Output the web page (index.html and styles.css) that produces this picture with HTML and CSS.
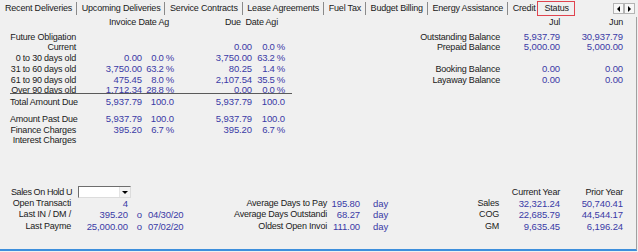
FILE: index.html
```html
<!DOCTYPE html>
<html lang="en">
<head>
    <meta charset="UTF-8">
    <title>Customer Status</title>
    <link rel="stylesheet" href="styles.css">
</head>
<body>
    <div class="tabs">
        <span class="tab">Recent Deliveries</span>
        <span class="tab">Upcoming Deliveries</span>
        <span class="tab">Service Contracts</span>
        <span class="tab">Lease Agreements</span>
        <span class="tab">Fuel Tax</span>
        <span class="tab">Budget Billing</span>
        <span class="tab">Energy Assistance</span>
        <span class="tab before-active">Credit</span>
        <span class="tab active">Status</span>
        <span class="scroll">
            <span class="scroll-btn left"></span>
            <span class="scroll-btn right"></span>
        </span>
    </div>

    <div class="panel">
        <div class="top">
            <!-- aging -->
            <div class="aging">
                <div class="aging-head">
                    <span class="h-inv">Invoice Date Ag</span>
                    <span>Due&nbsp; Date Agi</span>
                </div>
                <div class="aging-body grid5">
                    <span class="lbl">Future Obligation</span><span></span><span></span><span></span><span></span>
                    <span class="lbl">Current</span><span></span><span></span><span class="num">0.00</span><span class="num pct">0.0 %</span>
                    <span class="lbl">0 to 30 days old</span><span class="num">0.00</span><span class="num pct">0.0 %</span><span class="num">3,750.00</span><span class="num pct">63.2 %</span>
                    <span class="lbl">31 to 60 days old</span><span class="num">3,750.00</span><span class="num pct">63.2 %</span><span class="num">80.25</span><span class="num pct">1.4 %</span>
                    <span class="lbl">61 to 90 days old</span><span class="num">475.45</span><span class="num pct">8.0 %</span><span class="num">2,107.54</span><span class="num pct">35.5 %</span>
                    <span class="lbl">Over 90 days old</span><span class="num">1,712.34</span><span class="num pct">28.8 %</span><span class="num">0.00</span><span class="num pct">0.0 %</span>
                </div>
                <div class="totals grid5">
                    <span class="lbl">Total Amount Due</span><span class="num">5,937.79</span><span class="num">100.0</span><span class="num">5,937.79</span><span class="num">100.0</span>
                </div>
                <div class="past grid5">
                    <span class="lbl">Amount Past Due</span><span class="num">5,937.79</span><span class="num">100.0</span><span class="num">5,937.79</span><span class="num">100.0</span>
                    <span class="lbl">Finance Charges</span><span class="num">395.20</span><span class="num pct">6.7 %</span><span class="num">395.20</span><span class="num pct">6.7 %</span>
                    <span class="lbl">Interest Charges</span><span></span><span></span><span></span><span></span>
                </div>
            </div>

            <!-- balances -->
            <div class="balances">
                <div class="bal-head grid3">
                    <span></span><span class="lbl">Jul</span><span class="lbl">Jun</span>
                </div>
                <div class="bal-body grid3">
                    <span class="lbl">Outstanding Balance</span><span class="num">5,937.79</span><span class="num">30,937.79</span>
                    <span class="lbl">Prepaid Balance</span><span class="num">5,000.00</span><span class="num">5,000.00</span>
                    <span class="blank-row"></span>
                    <span class="lbl">Booking Balance</span><span class="num">0.00</span><span class="num">0.00</span>
                    <span class="lbl">Layaway Balance</span><span class="num">0.00</span><span class="num">0.00</span>
                </div>
            </div>
        </div>

        <div class="bottom">
            <div class="grp grp-left">
                <span class="hold-lbl">Sales On Hold U</span>
                <span class="combo"><span class="combo-btn"></span></span>
                <span class="lbl">Open Transacti</span><span class="num">4</span><span></span><span></span>
                <span class="lbl">Last IN / DM /</span><span class="num">395.20</span><span class="num">o</span><span class="date">04/30/20</span>
                <span class="lbl">Last Payme</span><span class="num">25,000.00</span><span class="num">o</span><span class="date">07/02/20</span>
            </div>
            <div class="grp grp-mid">
                <span class="lbl">Average Days to Pay</span><span class="num">195.80</span><span class="unit">day</span>
                <span class="lbl">Average Days Outstandi</span><span class="num">68.27</span><span class="unit">day</span>
                <span class="lbl">Oldest Open Invoi</span><span class="num">111.00</span><span class="unit">day</span>
            </div>
            <div class="grp grp-right">
                <span></span><span class="lbl">Current Year</span><span class="lbl">Prior Year</span>
                <span class="lbl">Sales</span><span class="num">32,321.24</span><span class="num">50,740.41</span>
                <span class="lbl">COG</span><span class="num">22,685.79</span><span class="num">44,544.17</span>
                <span class="lbl">GM</span><span class="num">9,635.45</span><span class="num">6,196.24</span>
            </div>
        </div>
    </div>
</body>
</html>
```

FILE: styles.css
```css
* {
    box-sizing: border-box;
}
body {
    margin: 0;
    width: 638px;
    height: 252px;
    overflow: hidden;
    background-color: #f0f0f0;
    font-family: "Liberation Sans", Arial, sans-serif;
    font-size: 9px;
    letter-spacing: -0.2px;
    color: #1a1a1a;
}

/* tab strip */
.tabs {
    display: flex;
    align-items: center;
    height: 17px;
}
.tab {
    height: 13px;
    line-height: 13px;
    padding: 0 4px 0 4.6px;
    border-left: 1px solid #8a8a8a;
    white-space: nowrap;
}
.tab:first-child {
    border-left: none;
    padding-left: 5px;
}
.tab.before-active {
    padding-right: 2px;
}
.tab.active {
    height: 15px;
    border: 1px solid #e0444f;
    padding: 0 5px 0 6px;
}
.scroll {
    display: flex;
    margin-left: auto;
    margin-right: 3px;
}
.scroll-btn {
    display: flex;
    align-items: center;
    justify-content: center;
    width: 11px;
    height: 11px;
    border: 1px solid #b4b4b4;
    background-color: #f7f7f7;
}
.scroll-btn::before {
    content: "";
    border-top: 3px solid transparent;
    border-bottom: 3px solid transparent;
}
.scroll-btn.left::before {
    border-right: 3px solid #000;
}
.scroll-btn.right::before {
    border-left: 3px solid #000;
}

/* page */
.panel {
    display: flex;
    flex-direction: column;
    width: 637px;
    height: 234px;
    padding-bottom: 17px;
    border-right: 1px solid #a0a0a0;
    border-bottom: 2px solid #3d8fdc;
}
.top {
    display: flex;
    justify-content: space-between;
    padding: 0 13px 0 10px;
}
.lbl {
    text-align: right;
    white-space: nowrap;
}
.num {
    text-align: right;
    white-space: nowrap;
    font-size: 9.5px;
    letter-spacing: -0.1px;
    color: #3a3aa6;
}
.pct {
    letter-spacing: -0.3px;
}

/* aging */
.aging {
    width: 282px;
}
.aging-head {
    display: grid;
    grid-template-columns: 215px auto;
    height: 11px;
    line-height: 11px;
}
.h-inv {
    padding-left: 99px;
}
.grid5 {
    display: grid;
    grid-template-columns: 66px 66px 32px 78px 33px;
    grid-auto-rows: 10.75px;
    line-height: 10.75px;
}
.aging-body {
    margin-top: 2px;
    padding-top: 1.5px;
    height: 64px;
    overflow: hidden;
    border-bottom: 1px solid #5a5a5a;
}
.totals {
    margin-top: 3px;
}
.past {
    margin-top: 6px;
}

/* balances */
.grid3 {
    display: grid;
    grid-template-columns: 100px 60px 63px;
}
.bal-head {
    height: 11px;
    line-height: 11px;
}
.bal-body {
    margin-top: 3.5px;
    grid-auto-rows: 10.75px;
    line-height: 10.75px;
}
.blank-row {
    grid-column: 1 / -1;
}

/* bottom */
.bottom {
    display: flex;
    margin-top: auto;
}
.grp {
    display: grid;
    grid-auto-rows: 11.3px;
    line-height: 11.3px;
}
.grp-left {
    grid-template-columns: 71px 57px 14px 39px;
}
.grp-mid {
    grid-template-columns: 107px 33px 26px;
    margin-left: 39px;
    padding-top: 11.3px;
}
.grp-right {
    grid-template-columns: 59px 61px 63px;
    margin-left: 54px;
}
.hold-lbl {
    padding-left: 11px;
    white-space: nowrap;
    letter-spacing: -0.4px;
}
.combo {
    grid-column: 2 / 5;
    align-self: center;
    display: flex;
    justify-content: flex-end;
    width: 53px;
    height: 12px;
    margin-left: 7px;
    background-color: #fff;
    border: 1px solid;
    border-color: #6e6e6e #dcdcdc #dcdcdc #6e6e6e;
}
.combo-btn {
    display: flex;
    align-items: center;
    justify-content: center;
    width: 11px;
    background-color: #f2f2f2;
    border-left: 1px solid #e4e4e4;
}
.combo-btn::before {
    content: "";
    border-left: 3px solid transparent;
    border-right: 3px solid transparent;
    border-top: 3px solid #000;
}
.date {
    padding-left: 6px;
    font-size: 9.5px;
    letter-spacing: -0.2px;
    color: #3a3aa6;
    white-space: nowrap;
}
.unit {
    padding-left: 13px;
    font-size: 9.5px;
    letter-spacing: 0;
    color: #3a3aa6;
}
```
